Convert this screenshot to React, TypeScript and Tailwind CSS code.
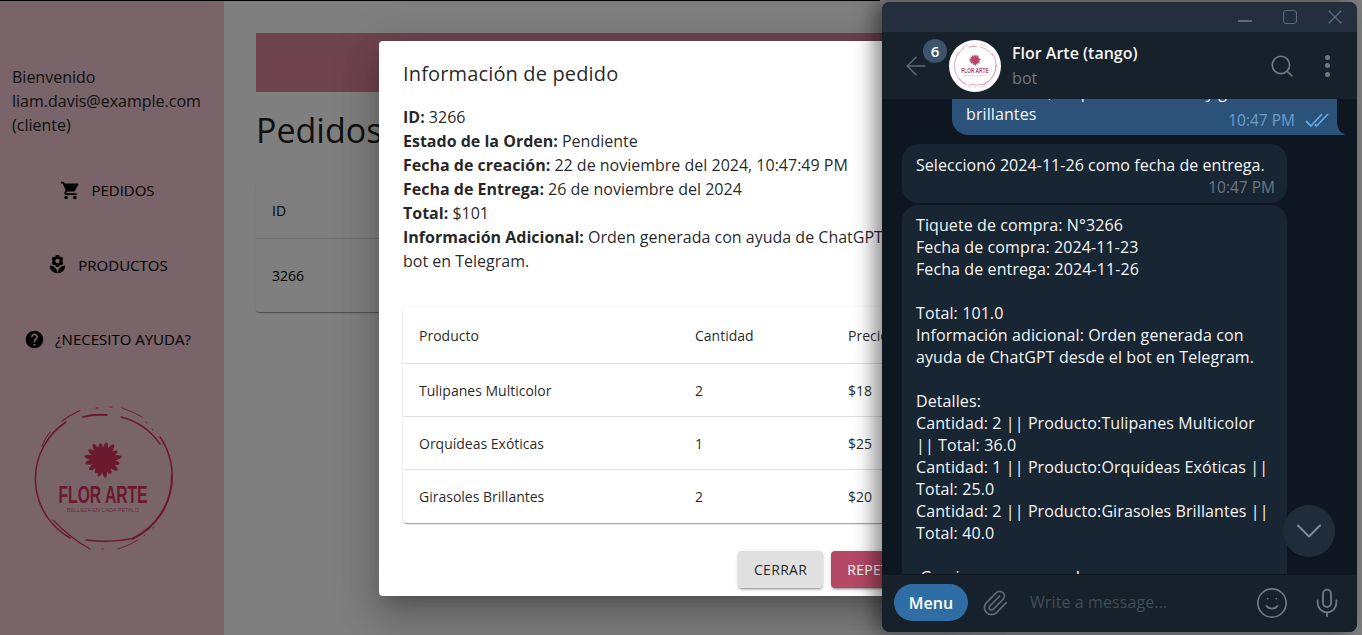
import { ArrowLeft, ChevronDown, Mic, Paperclip, Search, Smile, X } from 'lucide-react';
import { MdHelp, MdLocalFlorist, MdShoppingCart } from 'react-icons/md';

const productos = [
  { nombre: 'Tulipanes Multicolor', cantidad: 2, precio: '$18' },
  { nombre: 'Orquídeas Exóticas', cantidad: 1, precio: '$25' },
  { nombre: 'Girasoles Brillantes', cantidad: 2, precio: '$20' },
];

const ticket = [
  'Tiquete de compra: N°3266',
  'Fecha de compra: 2024-11-23',
  'Fecha de entrega: 2024-11-26',
  '',
  'Total: 101.0',
  'Información adicional: Orden generada con',
  'ayuda de ChatGPT desde el bot en Telegram.',
  '',
  'Detalles:',
  'Cantidad: 2 || Producto:Tulipanes Multicolor',
  '|| Total: 36.0',
  'Cantidad: 1 || Producto:Orquídeas Exóticas ||',
  'Total: 25.0',
  'Cantidad: 2 || Producto:Girasoles Brillantes ||',
  'Total: 40.0',
  '',
  '¡Gracias por comprar!',
];

// angulo y largo de cada petalo de la flor del logo
const petals = [
  [-150, 13], [-125, 15], [-100, 16], [-78, 17], [-55, 16], [-32, 17], [-10, 15], [12, 16],
  [35, 17], [58, 15], [80, 17], [102, 15], [125, 16], [150, 14], [172, 16], [195, 15],
];

function Logo({ color, size }: { color: string; size: number }) {
  return (
    <svg width={size} height={size} viewBox="0 0 150 150" fill="none" className="block">
      <g stroke={color} strokeLinecap="round">
        <path d="M38 18 A68 68 0 0 0 42 134" strokeWidth="1.5" />
        <path d="M55 13 Q66 10 79 11" strokeWidth="1.8" />
        <path d="M34 17 Q42 11 52 6.5" strokeWidth="1.2" />
        <path d="M93 13 A67 67 0 0 1 132 40" strokeWidth="1.4" />
        <path d="M94 4 Q104 7 114 13" strokeWidth="0.9" />
        <path d="M132 33 A69 69 0 0 1 144 75" strokeWidth="1.5" />
        <path d="M144 72 A69 69 0 0 1 105 134.5" strokeWidth="2" />
        <path d="M105 134.5 Q84 139 58 136" strokeWidth="1.6" />
        <path d="M14 42 Q17 34 22 28" strokeWidth="1" />
        <path d="M25 116 Q42 134 62 145" strokeWidth="1.1" />
        <path d="M90 145 Q100 142 110 136" strokeWidth="0.9" />
        <path d="M68 4 L70 4 M82 3 L84 3 M118 18 L119 19 M124 25 L125 26 M116 132 L117 131 M125 124 L126 123 M74 145 L75 145" strokeWidth="1" />
      </g>
      <g fill={color}>
        {petals.map(([a, l]) => (
          <ellipse key={a} cx="75" cy={56 - l / 2 - 1} rx="2.7" ry={l / 2 + 1} transform={`rotate(${a} 75 56)`} />
        ))}
        <circle cx="75" cy="56" r="4" />
        <text
          x="75"
          y="98.5"
          textAnchor="middle"
          fontFamily="'Liberation Sans', sans-serif"
          fontWeight="700"
          fontSize="24"
          textLength="89"
          lengthAdjust="spacingAndGlyphs"
        >
          FLOR ARTE
        </text>
        <text
          x="75"
          y="108"
          textAnchor="middle"
          fontFamily="'Liberation Sans', sans-serif"
          fontSize="5"
          textLength="72"
          lengthAdjust="spacingAndGlyphs"
          opacity="0.7"
        >
          BELLEZA EN CADA PETALO
        </text>
      </g>
    </svg>
  );
}

function Sidebar() {
  return (
    <aside className="w-[224px] shrink-0 bg-[#f0c8d2] pt-[65px] text-[16px] leading-[24px] text-[#1f1f1f]">
      <div className="px-3">
        <p>Bienvenido</p>
        <p>liam.davis@example.com</p>
        <p>(cliente)</p>
      </div>
      <nav className="mt-[35px] flex w-[215px] flex-col gap-[38px] text-[15px] font-medium text-black">
        <a className="flex h-[36.5px] items-center justify-center gap-[10px]">
          <MdShoppingCart size={21} />
          PEDIDOS
        </a>
        <a className="flex h-[36.5px] items-center justify-center gap-[10px]">
          <MdLocalFlorist size={21} />
          PRODUCTOS
        </a>
        <a className="flex h-[36.5px] items-center justify-center gap-[10px]">
          <MdHelp size={21} />
          ¿NECESITO AYUDA?
        </a>
      </nav>
      <div className="ml-[28px] mt-[46px]">
        <Logo color="#d8325f" size={150} />
      </div>
    </aside>
  );
}

function Main() {
  return (
    <main className="flex-1 bg-white px-8 pt-[33px]">
      <div className="h-[59px] bg-[#de86a0]" />
      <h1 className="mt-[15px] text-[34px] leading-[46px] text-[#1f1f1f]">Pedidos</h1>
      <div className="mt-[29px] h-[130px] rounded-[4px] text-[14px] shadow-[0_2px_1px_-1px_rgba(0,0,0,0.2),0_1px_1px_0_rgba(0,0,0,0.14),0_1px_3px_0_rgba(0,0,0,0.12)]">
        <div className="flex h-[57px] items-center border-b border-[#e0e0e0] px-4 font-medium">ID</div>
        <div className="flex h-[73px] items-center px-4">3266</div>
      </div>
    </main>
  );
}

function OrderDialog() {
  return (
    <section className="absolute left-[379px] top-[41px] h-[555px] w-[600px] rounded-[4px] bg-white px-6 text-black/87 shadow-[0_11px_15px_-7px_rgba(0,0,0,0.2),0_24px_38px_3px_rgba(0,0,0,0.14),0_9px_46px_8px_rgba(0,0,0,0.12)]">
      <h2 className="pt-[16px] text-[20px] font-medium leading-[34px] tracking-[0.15px]">Información de pedido</h2>
      <div className="mt-[14px] text-[16px] leading-[24px]">
        <p><b>ID:</b> 3266</p>
        <p><b>Estado de la Orden:</b> Pendiente</p>
        <p><b>Fecha de creación:</b> 22 de noviembre del 2024, 10:47:49 PM</p>
        <p><b>Fecha de Entrega:</b> 26 de noviembre del 2024</p>
        <p><b>Total:</b> $101</p>
        <p><b>Información Adicional:</b> Orden generada con ayuda de ChatGPT desde el bot en Telegram.</p>
      </div>
      <div className="mt-[34px] rounded-[4px] text-[14px] shadow-[0_2px_1px_-1px_rgba(0,0,0,0.2),0_1px_1px_0_rgba(0,0,0,0.14),0_1px_3px_0_rgba(0,0,0,0.12)]">
        <div className="grid h-[57px] grid-cols-[276px_153px_1fr] items-center border-b border-[#e0e0e0] px-4 font-medium">
          <span>Producto</span>
          <span>Cantidad</span>
          <span>Precio</span>
        </div>
        {productos.map((p, i) => (
          <div
            key={p.nombre}
            className={`grid h-[53px] grid-cols-[276px_153px_1fr] items-center px-4 ${
              i < 2 ? 'border-b border-[#e0e0e0]' : ''
            }`}
          >
            <span>{p.nombre}</span>
            <span>{p.cantidad}</span>
            <span>{p.precio}</span>
          </div>
        ))}
      </div>
      <div className="mt-[28px] flex gap-2 pl-[335px] text-[14px] font-medium tracking-[0.3px]">
        <button className="h-[37px] rounded-[4px] bg-[#e0e0e0] px-4 shadow-[0_3px_1px_-2px_rgba(0,0,0,0.2),0_2px_2px_0_rgba(0,0,0,0.14),0_1px_5px_0_rgba(0,0,0,0.12)]">
          CERRAR
        </button>
        <button className="h-[37px] rounded-[4px] bg-[#b54867] px-4 text-white shadow-[0_3px_1px_-2px_rgba(0,0,0,0.2),0_2px_2px_0_rgba(0,0,0,0.14),0_1px_5px_0_rgba(0,0,0,0.12)]">
          REPETIR
        </button>
      </div>
    </section>
  );
}

function TelegramWindow() {
  return (
    <section className="absolute left-[882px] top-[2px] flex h-[630px] w-[475px] flex-col overflow-hidden rounded-[8px] bg-[#0e1621] text-[16px] leading-[22px] tracking-[0.1px] text-[#f5f5f5] shadow-[-8px_0_20px_rgba(0,0,0,0.45)]">
      {/* barra de titulo */}
      <div className="flex h-[30px] shrink-0 items-center justify-end bg-[#242f3d] pr-[10px] text-[#5c6b7a]">
        <span className="mt-[8px] h-[1.5px] w-[14px] bg-[#5c6b7a]" />
        <span className="ml-[31px] h-[14px] w-[14px] rounded-[3px] border-[1.5px] border-[#5c6b7a]" />
        <X size={24} strokeWidth={1.3} className="ml-[26px]" />
      </div>

      {/* cabecera */}
      <header className="relative flex h-[67px] shrink-0 items-center bg-[#17212b] pl-[20px] pr-[27px]">
        <ArrowLeft size={30} strokeWidth={1.3} className="ml-[-1px] shrink-0 text-[#5c6873]" />
        <span className="absolute left-[41px] top-[7px] flex h-6 w-6 items-center justify-center rounded-full bg-[#3e546a] text-[15px] font-semibold text-white">
          6
        </span>
        <div className="ml-[18px] flex h-[52px] w-[52px] shrink-0 items-center justify-center rounded-full bg-white">
          <Logo color="#b8456a" size={46} />
        </div>
        <div className="ml-[11px] flex-1">
          <p className="font-semibold leading-[22px] tracking-normal text-[#f5f5f5]">Flor Arte (tango)</p>
          <p className="mt-[3px] text-[#6d7883]">bot</p>
        </div>
        <Search size={26} strokeWidth={1.6} className="text-[#6d7883]" />
        <span className="ml-[30px] flex flex-col gap-[3.5px]">
          <i className="h-[5px] w-[5px] rounded-full bg-[#6d7883]" />
          <i className="h-[5px] w-[5px] rounded-full bg-[#6d7883]" />
          <i className="h-[5px] w-[5px] rounded-full bg-[#6d7883]" />
        </span>
      </header>

      {/* mensajes */}
      <div className="relative flex min-h-0 flex-1 flex-col overflow-hidden pl-[20px]">
        <div className="relative ml-[50px] mt-[-18px] w-[385px] shrink-0 rounded-bl-[16px] rounded-tl-[16px] rounded-tr-[16px] bg-[#2b5278] pb-[5px] pl-[14px] pr-[14px]">
          <p>Hola señor, un pedido de rosas y girasoles brillantes</p>
          <div className="mt-[-15px] flex items-center justify-end gap-[10px] text-[15.5px] leading-[20px] tracking-normal text-[#6d9fc9]">
            10:47 PM
            <svg width="24" height="16" viewBox="0 0 24 16" fill="none" stroke="#5fa8e8" strokeWidth="1.8" className="mr-[-6px]">
              <path d="M1 9l5 5L17 2" />
              <path d="M10 12.5l1.5 1.5L23 2" />
            </svg>
          </div>
          <svg width="8" height="16" viewBox="0 0 8 16" className="absolute bottom-0 left-full" fill="#2b5278">
            <path d="M0 0c0 8 2 13 7 15l1 1H0z" />
          </svg>
        </div>

        <div className="mt-[9px] w-[385px] shrink-0 rounded-[16px] bg-[#182533] pb-[6px] pl-[14px] pr-[12px] pt-[10px]">
          <p className="tracking-[0.05px]">Seleccionó 2024-11-26 como fecha de entrega.</p>
          <p className="mt-[1px] text-right text-[15.5px] leading-[20px] tracking-normal text-[#6d7883]">10:47 PM</p>
        </div>

        <div className="mt-[2px] w-[385px] shrink-0 rounded-[16px] bg-[#182533] px-[14px] pb-[10px] pt-[9px] whitespace-nowrap">
          {ticket.map((l, i) => (
            <p key={i} className="h-[22px]">{l}</p>
          ))}
        </div>

        <button className="absolute bottom-[17px] right-[22px] flex h-[52px] w-[52px] items-center justify-center rounded-full bg-[#1f2c3a] text-[#7f8b97]">
          <ChevronDown size={44} strokeWidth={1.1} />
        </button>
      </div>

      {/* caja de texto */}
      <footer className="flex h-[58px] shrink-0 items-center border-t border-[#101821] bg-[#17212b] pb-[2px] pl-[12px] pr-[14px]">
        <span className="flex h-[37px] w-[74px] items-center justify-center rounded-full bg-[#2f6ea5] font-semibold tracking-normal text-white">
          Menu
        </span>
        <Paperclip size={28} strokeWidth={1.5} className="ml-[13px] text-[#5c6873]" />
        <span className="ml-[21px] flex-1 pb-[2px] text-[#3f4d5c]">Write a message...</span>
        <Smile size={34} strokeWidth={1.2} className="text-[#6d7883]" />
        <Mic size={32} strokeWidth={1.4} className="ml-[22px] text-[#6d7883]" />
      </footer>
    </section>
  );
}

export default function App() {
  return (
    <div className="relative h-[635px] w-[1362px] overflow-hidden bg-white font-['Open_Sans',sans-serif]">
      <div className="flex h-full">
        <Sidebar />
        <Main />
      </div>
      <div className="absolute inset-0 bg-black/50" />
      <div className="absolute left-0 top-0 h-px w-[880px] bg-black" />
      <OrderDialog />
      <TelegramWindow />
    </div>
  );
}
